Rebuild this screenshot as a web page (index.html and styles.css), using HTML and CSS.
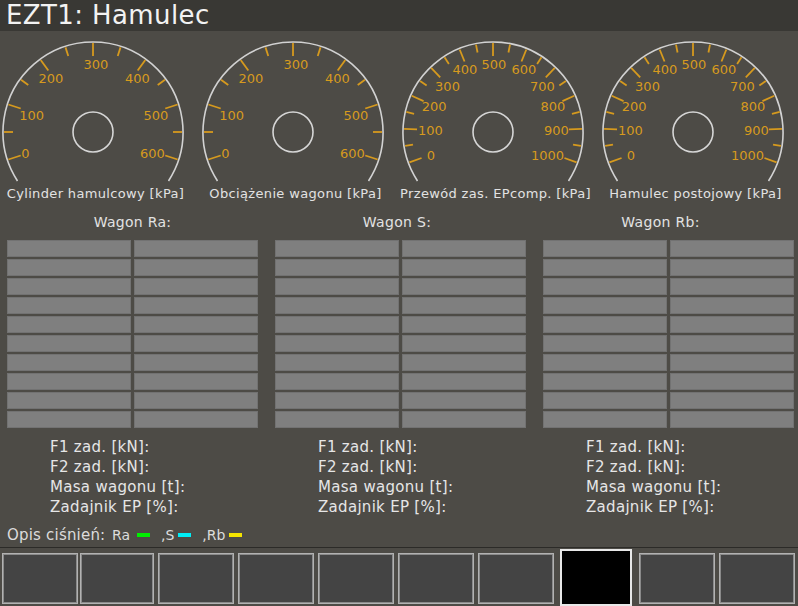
FILE: index.html
```html
<!DOCTYPE html>
<html lang="pl">
<head>
<meta charset="utf-8">
<title>EZT1: Hamulec</title>
<link rel="stylesheet" href="styles.css">
</head>
<body>
<svg class="defs" width="0" height="0" aria-hidden="true">
  <defs>
    <g id="scale600">
      <path d="M -75.5 49 A 90 90 0 1 1 75.5 49" fill="none" stroke="#d2d2d2" stroke-width="1.6"/>
      <circle cx="0" cy="0" r="20" fill="none" stroke="#d6d6d6" stroke-width="1.6"/>
      <g stroke="#d69a1e" stroke-width="1.8">
        <line x1="0" y1="-76" x2="0" y2="-89" transform="rotate(-108)"/>
        <line x1="0" y1="-76" x2="0" y2="-89" transform="rotate(-72)"/>
        <line x1="0" y1="-76" x2="0" y2="-89" transform="rotate(-36)"/>
        <line x1="0" y1="-76" x2="0" y2="-89" transform="rotate(0)"/>
        <line x1="0" y1="-76" x2="0" y2="-89" transform="rotate(36)"/>
        <line x1="0" y1="-76" x2="0" y2="-89" transform="rotate(72)"/>
        <line x1="0" y1="-76" x2="0" y2="-89" transform="rotate(108)"/>
        <line x1="0" y1="-80" x2="0" y2="-89" transform="rotate(-90)"/>
        <line x1="0" y1="-80" x2="0" y2="-89" transform="rotate(-54)"/>
        <line x1="0" y1="-80" x2="0" y2="-89" transform="rotate(-18)"/>
        <line x1="0" y1="-80" x2="0" y2="-89" transform="rotate(18)"/>
        <line x1="0" y1="-80" x2="0" y2="-89" transform="rotate(54)"/>
        <line x1="0" y1="-80" x2="0" y2="-89" transform="rotate(90)"/>
      </g>
      <g fill="#d69a1e" font-family="DejaVu Sans, sans-serif" font-size="13" text-anchor="middle" dominant-baseline="central">
        <text x="-67.5" y="21.3">0</text>
        <text x="-61.3" y="-17">100</text>
        <text x="-42.2" y="-53.7">200</text>
        <text x="2.8" y="-67.5">300</text>
        <text x="44.5" y="-53.7">400</text>
        <text x="62.8" y="-17">500</text>
        <text x="59.5" y="21.3">600</text>
      </g>
    </g>
    <g id="scale1000">
      <path d="M -75.5 49 A 90 90 0 1 1 75.5 49" fill="none" stroke="#d2d2d2" stroke-width="1.6"/>
      <circle cx="0" cy="0" r="20" fill="none" stroke="#d6d6d6" stroke-width="1.6"/>
      <g stroke="#d69a1e" stroke-width="1.8">
        <line x1="0" y1="-76" x2="0" y2="-89" transform="rotate(-110)"/>
        <line x1="0" y1="-76" x2="0" y2="-89" transform="rotate(-88)"/>
        <line x1="0" y1="-76" x2="0" y2="-89" transform="rotate(-66)"/>
        <line x1="0" y1="-76" x2="0" y2="-89" transform="rotate(-44)"/>
        <line x1="0" y1="-76" x2="0" y2="-89" transform="rotate(-22)"/>
        <line x1="0" y1="-76" x2="0" y2="-89" transform="rotate(0)"/>
        <line x1="0" y1="-76" x2="0" y2="-89" transform="rotate(22)"/>
        <line x1="0" y1="-76" x2="0" y2="-89" transform="rotate(44)"/>
        <line x1="0" y1="-76" x2="0" y2="-89" transform="rotate(66)"/>
        <line x1="0" y1="-76" x2="0" y2="-89" transform="rotate(88)"/>
        <line x1="0" y1="-76" x2="0" y2="-89" transform="rotate(110)"/>
        <line x1="0" y1="-81" x2="0" y2="-89" transform="rotate(-99)"/>
        <line x1="0" y1="-81" x2="0" y2="-89" transform="rotate(-77)"/>
        <line x1="0" y1="-81" x2="0" y2="-89" transform="rotate(-55)"/>
        <line x1="0" y1="-81" x2="0" y2="-89" transform="rotate(-33)"/>
        <line x1="0" y1="-81" x2="0" y2="-89" transform="rotate(-11)"/>
        <line x1="0" y1="-81" x2="0" y2="-89" transform="rotate(11)"/>
        <line x1="0" y1="-81" x2="0" y2="-89" transform="rotate(33)"/>
        <line x1="0" y1="-81" x2="0" y2="-89" transform="rotate(55)"/>
        <line x1="0" y1="-81" x2="0" y2="-89" transform="rotate(77)"/>
        <line x1="0" y1="-81" x2="0" y2="-89" transform="rotate(99)"/>
      </g>
      <g fill="#d69a1e" font-family="DejaVu Sans, sans-serif" font-size="13" text-anchor="middle" dominant-baseline="central">
        <text x="-62" y="23.7">0</text>
        <text x="-62.7" y="-2">100</text>
        <text x="-58.8" y="-25.3">200</text>
        <text x="-45.5" y="-46">300</text>
        <text x="-28.2" y="-62.7">400</text>
        <text x="0.8" y="-67.7">500</text>
        <text x="30.8" y="-62.7">600</text>
        <text x="49.5" y="-46">700</text>
        <text x="59.8" y="-26">800</text>
        <text x="63.5" y="-2">900</text>
        <text x="54.5" y="23">1000</text>
      </g>
    </g>
  </defs>
</svg>

<header class="titlebar">EZT1: Hamulec</header>

<section class="gauges">
  <div class="gauge">
    <svg class="dial" viewBox="-93 -96 200 151" width="200" height="151"><use href="#scale600"/></svg>
    <div class="caption">Cylinder hamulcowy [kPa]</div>
  </div>
  <div class="gauge">
    <svg class="dial" viewBox="-93 -96 200 151" width="200" height="151"><use href="#scale600"/></svg>
    <div class="caption">Obciążenie wagonu [kPa]</div>
  </div>
  <div class="gauge">
    <svg class="dial" viewBox="-93 -96 200 151" width="200" height="151"><use href="#scale1000"/></svg>
    <div class="caption">Przewód zas. EPcomp. [kPa]</div>
  </div>
  <div class="gauge">
    <svg class="dial" viewBox="-93 -96 200 151" width="200" height="151"><use href="#scale1000"/></svg>
    <div class="caption">Hamulec postojowy [kPa]</div>
  </div>
</section>

<section class="wagons">
  <div class="wagon">
    <div class="wagon-title">Wagon Ra:</div>
    <div class="cells">
      <div class="cell"></div><div class="cell"></div>
      <div class="cell"></div><div class="cell"></div>
      <div class="cell"></div><div class="cell"></div>
      <div class="cell"></div><div class="cell"></div>
      <div class="cell"></div><div class="cell"></div>
      <div class="cell"></div><div class="cell"></div>
      <div class="cell"></div><div class="cell"></div>
      <div class="cell"></div><div class="cell"></div>
      <div class="cell"></div><div class="cell"></div>
      <div class="cell"></div><div class="cell"></div>
    </div>
    <div class="info">
      <div>F1 zad. [kN]:</div>
      <div>F2 zad. [kN]:</div>
      <div>Masa wagonu [t]:</div>
      <div>Zadajnik EP [%]:</div>
    </div>
  </div>
  <div class="wagon">
    <div class="wagon-title wagon-title-s">Wagon S:</div>
    <div class="cells">
      <div class="cell"></div><div class="cell"></div>
      <div class="cell"></div><div class="cell"></div>
      <div class="cell"></div><div class="cell"></div>
      <div class="cell"></div><div class="cell"></div>
      <div class="cell"></div><div class="cell"></div>
      <div class="cell"></div><div class="cell"></div>
      <div class="cell"></div><div class="cell"></div>
      <div class="cell"></div><div class="cell"></div>
      <div class="cell"></div><div class="cell"></div>
      <div class="cell"></div><div class="cell"></div>
    </div>
    <div class="info">
      <div>F1 zad. [kN]:</div>
      <div>F2 zad. [kN]:</div>
      <div>Masa wagonu [t]:</div>
      <div>Zadajnik EP [%]:</div>
    </div>
  </div>
  <div class="wagon">
    <div class="wagon-title wagon-title-rb">Wagon Rb:</div>
    <div class="cells">
      <div class="cell"></div><div class="cell"></div>
      <div class="cell"></div><div class="cell"></div>
      <div class="cell"></div><div class="cell"></div>
      <div class="cell"></div><div class="cell"></div>
      <div class="cell"></div><div class="cell"></div>
      <div class="cell"></div><div class="cell"></div>
      <div class="cell"></div><div class="cell"></div>
      <div class="cell"></div><div class="cell"></div>
      <div class="cell"></div><div class="cell"></div>
      <div class="cell"></div><div class="cell"></div>
    </div>
    <div class="info">
      <div>F1 zad. [kN]:</div>
      <div>F2 zad. [kN]:</div>
      <div>Masa wagonu [t]:</div>
      <div>Zadajnik EP [%]:</div>
    </div>
  </div>
</section>

<div class="legend">
  <span class="legend-label">Opis ciśnień:</span>
  <span class="legend-item">Ra</span><span class="swatch swatch-ra"></span>
  <span class="legend-item legend-s">,S</span><span class="swatch swatch-s"></span>
  <span class="legend-item legend-rb">,Rb</span><span class="swatch swatch-rb"></span>
</div>

<footer class="buttonbar">
  <div class="btn"></div>
  <div class="btn"></div>
  <div class="btn"></div>
  <div class="btn"></div>
  <div class="btn"></div>
  <div class="btn"></div>
  <div class="btn"></div>
  <div class="btn btn-active"></div>
  <div class="btn"></div>
  <div class="btn"></div>
</footer>
</body>
</html>
```

FILE: styles.css
```css
html, body {
  margin: 0;
  padding: 0;
}

body {
  width: 798px;
  height: 606px;
  overflow: hidden;
  background: #4d4b46;
  font-family: "DejaVu Sans", "Noto Sans", sans-serif;
  color: #dedede;
}

.defs {
  position: absolute;
  width: 0;
  height: 0;
  overflow: hidden;
}

.titlebar {
  height: 31px;
  box-sizing: border-box;
  background: #393834;
  color: #f2f2f2;
  font-size: 26px;
  letter-spacing: 0.4px;
  line-height: 31px;
  padding-left: 6px;
}

.gauges {
  display: flex;
  padding-top: 5px;
}

.gauge {
  flex: none;
  width: 200px;
  display: flex;
  flex-direction: column;
}

.dial {
  display: block;
}

.caption {
  font-size: 13px;
  letter-spacing: 0.35px;
  line-height: 14px;
  height: 14px;
  text-align: center;
  padding-right: 9px;
  white-space: nowrap;
  color: #e2e2e2;
}

.wagons {
  display: flex;
  gap: 17px;
  padding-left: 7px;
}

.wagon {
  flex: none;
  width: 251px;
}

.wagon-title {
  margin-top: 13px;
  margin-bottom: 9px;
  font-size: 14px;
  letter-spacing: 0.3px;
  line-height: 17px;
  text-align: center;
  color: #e2e2e2;
}

.wagon-title-s {
  padding-right: 7px;
}

.wagon-title-rb {
  padding-right: 16px;
}

.cells {
  display: grid;
  grid-template-columns: 1fr 1fr;
  column-gap: 3px;
  row-gap: 2px;
}

.cell {
  height: 17px;
  box-sizing: border-box;
  background: #7f7f7f;
  border: 1px solid #727272;
}

.info {
  margin-top: 9px;
  padding-left: 43px;
  font-size: 15px;
  letter-spacing: 0.3px;
  line-height: 20px;
  color: #e6e6e6;
}

.legend {
  margin-top: 9px;
  padding-left: 7px;
  height: 18px;
  display: flex;
  align-items: center;
  font-size: 14px;
  line-height: 18px;
  color: #dcdcdc;
}

.legend-label {
  width: 105px;
  font-size: 15px;
  letter-spacing: 0.2px;
  white-space: nowrap;
}

.legend-s {
  margin-left: 11px;
}

.legend-rb {
  margin-left: 11px;
}

.swatch {
  display: inline-block;
  width: 13px;
  height: 4px;
  margin-left: 7px;
}

.swatch-ra { background: #00ee00; }
.swatch-s { background: #00eef6; margin-left: 4px; }
.swatch-rb { background: #f4e400; margin-left: 4px; }

.buttonbar {
  margin-top: 3px;
  border-top: 1px solid #2c2b28;
  padding: 5px 0 0 2px;
  display: flex;
  gap: 4px;
  align-items: flex-start;
}

.btn {
  flex: none;
  width: 76px;
  height: 51px;
  box-sizing: border-box;
  background: #444444;
  border: 1px solid #b2b2b2;
  box-shadow: inset 0 0 0 1px #8a8a8a;
}

.btn:first-child {
  margin-right: -2px;
}

.btn:nth-child(2) {
  width: 74px;
}

.btn-active {
  width: 72px;
  height: 57px;
  margin-top: -4px;
  margin-left: 2px;
  margin-right: 3px;
  background: #000000;
  border: 2px solid #e8e8e8;
  box-shadow: none;
}
```
